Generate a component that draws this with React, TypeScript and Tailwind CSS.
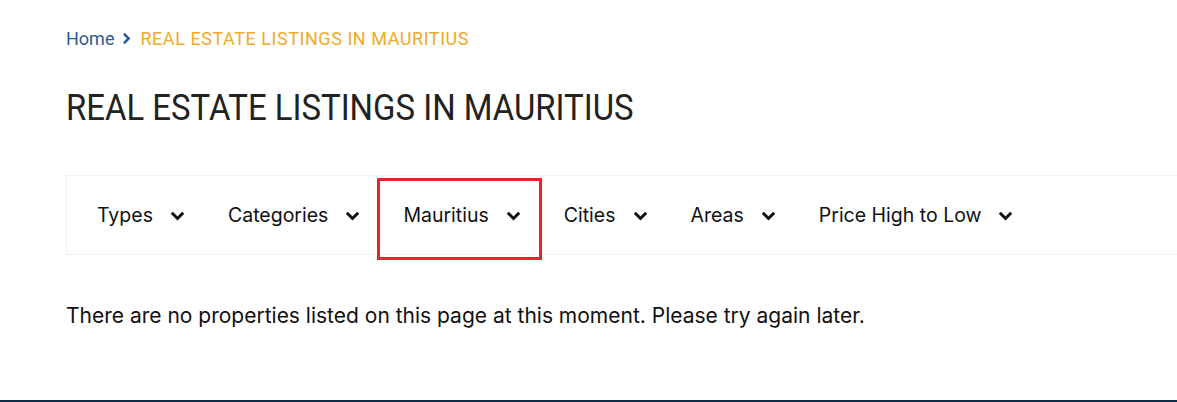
import React from "react";

const items = ["Types", "Categories", "Mauritius", "Cities", "Areas", "Price High to Low"];

function ChevDown() {
  return (
    <svg width="13" height="9" viewBox="0 0 13 9" className="shrink-0">
      <polyline points="1.8,1.8 6.5,6.5 11.2,1.8" fill="none" stroke="#111111" strokeWidth="3" strokeLinecap="square" />
    </svg>
  );
}

function ChevRight() {
  return (
    <svg width="8" height="11" viewBox="0 0 8 11" className="shrink-0 mx-[9px] mt-[5px]">
      <polyline points="1.8,1.6 5.6,5.5 1.8,9.4" fill="none" stroke="#2b5c8e" strokeWidth="2.6" strokeLinecap="square" />
    </svg>
  );
}

export default function App() {
  return (
    <div className="w-[1177px] h-[402px] bg-white flex flex-col overflow-hidden">
      <div className="flex-1 pl-[66px]">
        <div className="pt-[28px] flex items-start h-[48px] text-[18px] leading-[21px] font-['Roboto',sans-serif]">
          <span className="text-[#2b5c8e]">Home</span>
          <ChevRight />
          <span className="text-[#f2a926] tracking-[0.55px]">REAL ESTATE LISTINGS IN MAURITIUS</span>
        </div>
        <h1 className="mt-[38px] h-[44px] leading-[44px] text-[36px] text-[#222222] font-['Roboto',sans-serif] whitespace-nowrap">
          <span className="inline-block origin-left scale-x-[0.914]">REAL ESTATE LISTINGS IN MAURITIUS</span>
        </h1>
        <div className="relative mt-[45px] h-[80px] border border-[#eef2f8] border-r-0 flex items-center pl-[8px]">
          {items.map((t) => (
            <div key={t} className="flex items-center gap-[18px] px-[22px] h-full pt-[2px] text-[19.5px] text-[#111111] font-['Inter',sans-serif]">
              <span>{t}</span>
              <ChevDown />
            </div>
          ))}
          <div className="absolute left-[310px] top-[2px] w-[165px] h-[82px] border-[3px] border-[#e3262b]" />
        </div>
        <p className="mt-[47px] text-[21px] leading-[28px] text-[#111111] font-['Inter',sans-serif]">
          There are no properties listed on this page at this moment. Please try again later.
        </p>
      </div>
      <div className="h-[2px] bg-[#0f2d47]" />
    </div>
  );
}
